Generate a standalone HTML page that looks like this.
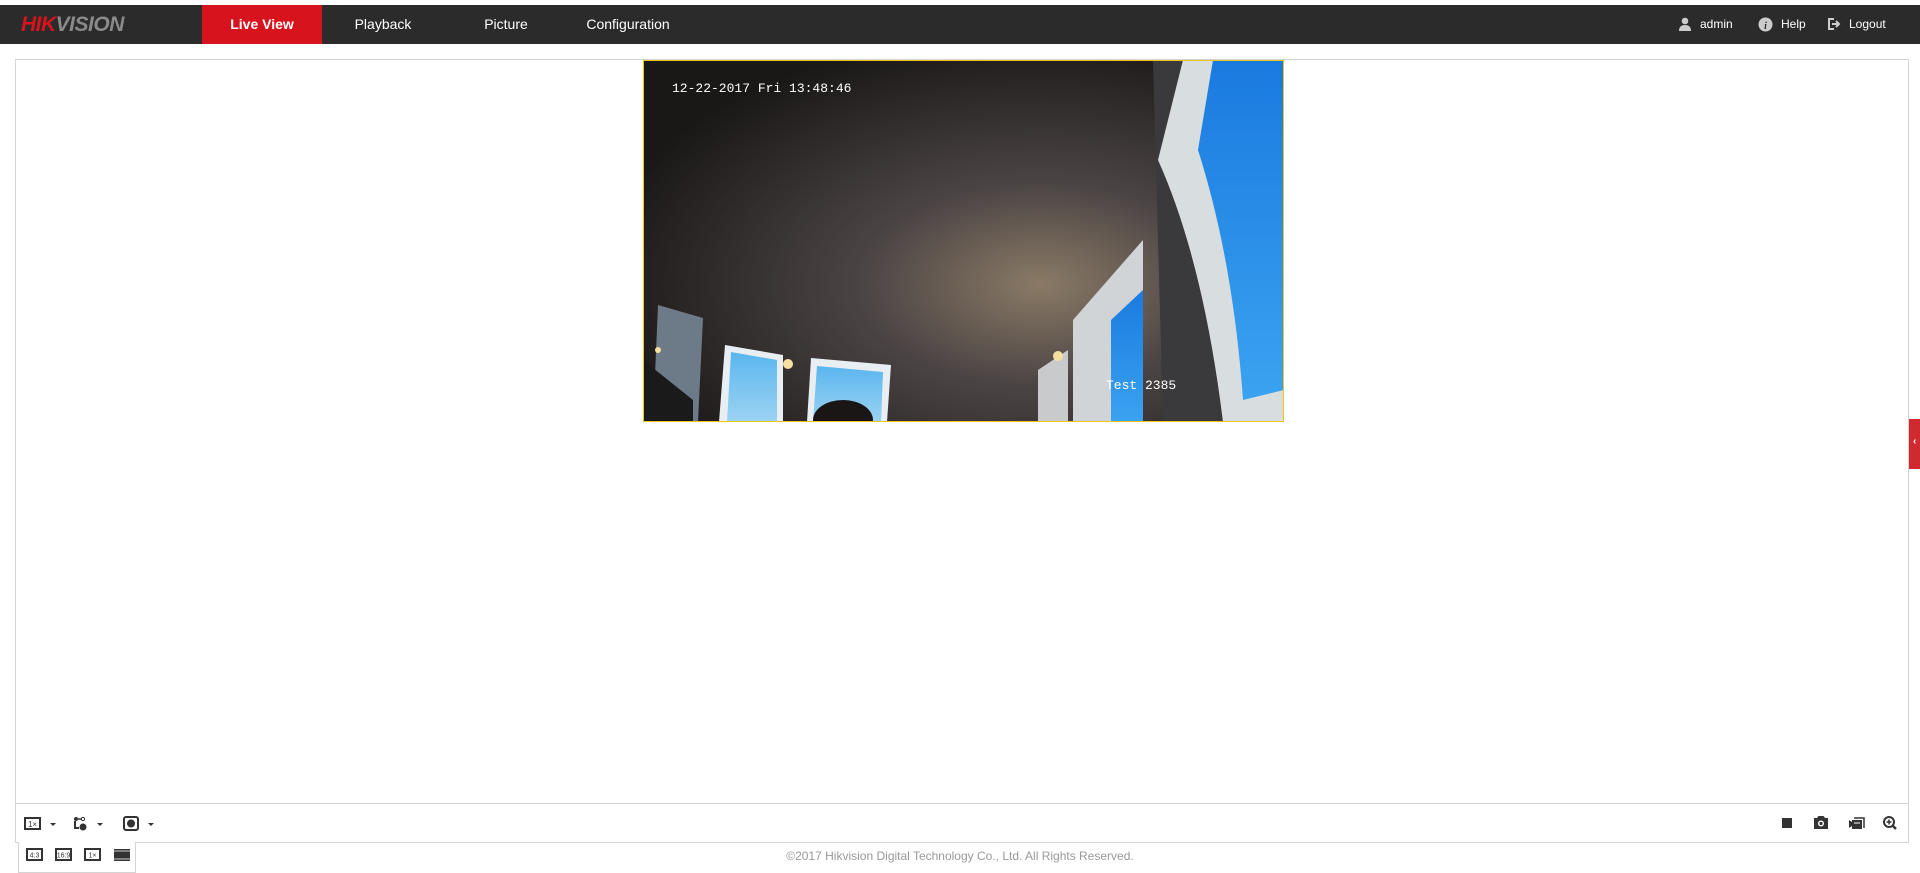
<!DOCTYPE html>
<html><head><meta charset="utf-8"><style>
*{margin:0;padding:0;box-sizing:border-box}
body{width:1920px;height:873px;background:#fff;font-family:"Liberation Sans",sans-serif;position:relative;overflow:hidden}
.hdr{position:absolute;left:0;top:5px;width:1920px;height:39px;background:#2b2b2b}
.logo{position:absolute;left:21px;top:8px;font-size:21px;font-weight:bold;font-style:italic;letter-spacing:-0.5px}
.nav{position:absolute;top:0;height:39px;line-height:39px;color:#fff;font-size:14px;text-align:center}
.r{position:absolute;top:0;height:39px;line-height:39px;color:#fff;font-size:12px}
.panel{position:absolute;left:15px;top:59px;width:1894px;height:784px;border:1px solid #d4d4d4}
.tb{position:absolute;left:15px;top:803px;width:1894px;height:1px;background:#d4d4d4}
.pop{position:absolute;left:18px;top:842px;width:118px;height:31px;border:1px solid #d4d4d4;border-top:none;background:#fff}
.foot{position:absolute;left:0;width:1920px;top:849px;text-align:center;color:#999;font-size:12px}
.ic{position:absolute}
</style></head><body>
<div class="hdr">
 <div class="logo"><span style="color:#d7141d">HIK</span><span style="color:#8a8a8a">VISION</span></div>
 <div class="nav" style="left:202px;width:120px;background:#d7141d;font-weight:bold">Live View</div>
 <div class="nav" style="left:343px;width:80px">Playback</div>
 <div class="nav" style="left:466px;width:80px">Picture</div>
 <div class="nav" style="left:578px;width:100px">Configuration</div>
 <svg class="ic" style="left:1678px;top:12px" width="14" height="14" viewBox="0 0 14 14"><circle cx="7" cy="4" r="3.3" fill="#ccc"/><path d="M1 14 Q1 8 7 8 Q13 8 13 14Z" fill="#ccc"/></svg>
 <div class="r" style="left:1700px">admin</div>
 <svg class="ic" style="left:1758px;top:12px" width="15" height="15" viewBox="0 0 15 15"><circle cx="7.5" cy="7.5" r="7" fill="#ccc"/><text x="7.5" y="12" font-size="10" font-style="italic" font-weight="bold" text-anchor="middle" fill="#2b2b2b" font-family="Liberation Serif">i</text></svg>
 <div class="r" style="left:1781px">Help</div>
 <svg class="ic" style="left:1828px;top:13px" width="13" height="12" viewBox="0 0 13 12"><path d="M6 1H1V11H6" stroke="#ccc" stroke-width="2" fill="none"/><path d="M4 6H10M8 3L11 6L8 9" stroke="#ccc" stroke-width="2" fill="none"/></svg>
 <div class="r" style="left:1849px">Logout</div>
</div>
<div class="panel"></div>
<div class="tb"></div>
<svg style="position:absolute;left:643px;top:60px" width="641" height="362" viewBox="0 0 641 362">
 <defs>
  <radialGradient id="g1" cx="0.62" cy="0.62" r="0.7"><stop offset="0" stop-color="#8a7a66"/><stop offset="0.4" stop-color="#4b4444"/><stop offset="1" stop-color="#1a1717"/></radialGradient>
  <linearGradient id="sky" x1="0" y1="0" x2="0" y2="1"><stop offset="0" stop-color="#1a7ae0"/><stop offset="1" stop-color="#3aa3f0"/></linearGradient>
  <linearGradient id="sky2" x1="0" y1="0" x2="0" y2="1"><stop offset="0" stop-color="#5ab6ee"/><stop offset="1" stop-color="#9cd3f2"/></linearGradient>
 </defs>
 <rect width="641" height="362" fill="url(#g1)"/>
 <path d="M510 0 L641 0 L641 362 L520 362 Z" fill="#3a3a3c"/>
 <path d="M540 0 L641 0 L641 362 L580 362 Q560 200 515 100 Z" fill="#d8dde0"/>
 <path d="M570 0 L641 0 L641 330 L600 340 Q590 200 555 90 Z" fill="url(#sky)"/>
 <path d="M430 260 L500 180 L500 362 L430 362Z" fill="#d0d4d6"/>
 <path d="M468 260 L500 230 L500 362 L468 362Z" fill="url(#sky)"/>
 <path d="M395 310 L425 290 L425 362 L395 362Z" fill="#c8cacc"/>
 <path d="M82 285 L140 295 L140 362 L76 362Z" fill="#e8eef2"/>
 <path d="M88 292 L134 300 L134 362 L84 362Z" fill="url(#sky2)"/>
 <path d="M168 298 L248 305 L244 362 L164 362Z" fill="#e8eef2"/>
 <path d="M174 306 L240 312 L238 362 L170 362Z" fill="url(#sky2)"/>
 <path d="M15 245 L60 258 L55 362 L10 362Z" fill="#6d7a88"/>
 <path d="M0 300 L50 340 L50 362 L0 362Z" fill="#1a1a1a"/>
 <ellipse cx="200" cy="360" rx="30" ry="20" fill="#1b1616"/>
 <circle cx="145" cy="304" r="5" fill="#f5e0a0"/>
 <circle cx="415" cy="296" r="5" fill="#f5e0a0"/>
 <circle cx="15" cy="290" r="3" fill="#f5e0a0"/>
 <text x="29" y="32" fill="#fff" font-family="Liberation Mono,monospace" font-size="13">12-22-2017 Fri 13:48:46</text>
 <text x="463" y="329" fill="#fff" font-family="Liberation Mono,monospace" font-size="13">Test 2385</text>
 <rect x="0.5" y="0.5" width="640" height="361" fill="none" stroke="#f0c419" stroke-width="1"/>
</svg>
<div style="position:absolute;left:1909px;top:419px;width:11px;height:50px;background:#cf2a2f"></div>
<div style="position:absolute;left:1913px;top:436px;color:#fff;font-size:10px;font-weight:bold">&lsaquo;</div>
<svg class="ic" style="left:24px;top:816px" width="140" height="16" viewBox="0 0 140 16">
 <rect x="1" y="2" width="15" height="11" fill="none" stroke="#333" stroke-width="2"/><text x="8.5" y="11" font-size="8" text-anchor="middle" fill="#333">1×</text>
 <path d="M26 7H32L29 10Z" fill="#333"/>
 <circle cx="52" cy="3" r="2" fill="#333"/><path d="M54 3H57" stroke="#333" stroke-width="1.5"/><circle cx="59" cy="3" r="1.6" fill="none" stroke="#333"/><path d="M51 5V12H55" stroke="#333" stroke-width="2" fill="none"/><circle cx="59" cy="11" r="3.5" fill="#333"/>
 <path d="M73 7H79L76 10Z" fill="#333"/>
 <rect x="100" y="1" width="14" height="13" rx="2" fill="none" stroke="#333" stroke-width="2"/><circle cx="107" cy="7.5" r="4" fill="#333"/>
 <path d="M124 7H130L127 10Z" fill="#333"/>
</svg>
<div class="pop"></div>
<svg class="ic" style="left:25px;top:847px" width="110" height="16" viewBox="0 0 110 16">
 <g fill="none" stroke="#333" stroke-width="2"><rect x="2" y="2" width="15" height="11"/><rect x="31" y="2" width="15" height="11"/><rect x="60" y="2" width="15" height="11"/></g>
 <rect x="89" y="2" width="16" height="12" fill="#333"/><path d="M89 4H105M89 12H105" stroke="#fff" stroke-width="0.8"/>
 <g font-size="7" text-anchor="middle" fill="#333" font-family="Liberation Sans"><text x="9.5" y="10.5">4:3</text><text x="38.5" y="10.5">16:9</text><text x="67.5" y="10.5">1×</text></g>
</svg>
<svg class="ic" style="left:1780px;top:814px" width="125" height="18" viewBox="0 0 125 18">
 <rect x="2" y="4" width="10" height="10" fill="#333"/>
 <path d="M34 4H37L38.5 2H43.5L45 4H48V15H34Z" fill="#333"/><circle cx="41" cy="9.5" r="3" fill="#fff"/><circle cx="41" cy="9.5" r="1.6" fill="#333"/>
 <path d="M69 6L72 8V12L69 14Z" fill="#333"/><rect x="72" y="6" width="10" height="9" fill="#333"/><path d="M74 4H84V14" stroke="#333" stroke-width="1.5" fill="none"/><path d="M74 9H80" stroke="#fff" stroke-width="1"/>
 <circle cx="109" cy="8" r="5" fill="none" stroke="#333" stroke-width="2"/><path d="M106.5 8H111.5M109 5.5V10.5" stroke="#333" stroke-width="1.5"/><path d="M112.5 11.5L116 15" stroke="#333" stroke-width="2.5"/>
</svg>
<div class="foot">©2017 Hikvision Digital Technology Co., Ltd. All Rights Reserved.</div>
</body></html>
